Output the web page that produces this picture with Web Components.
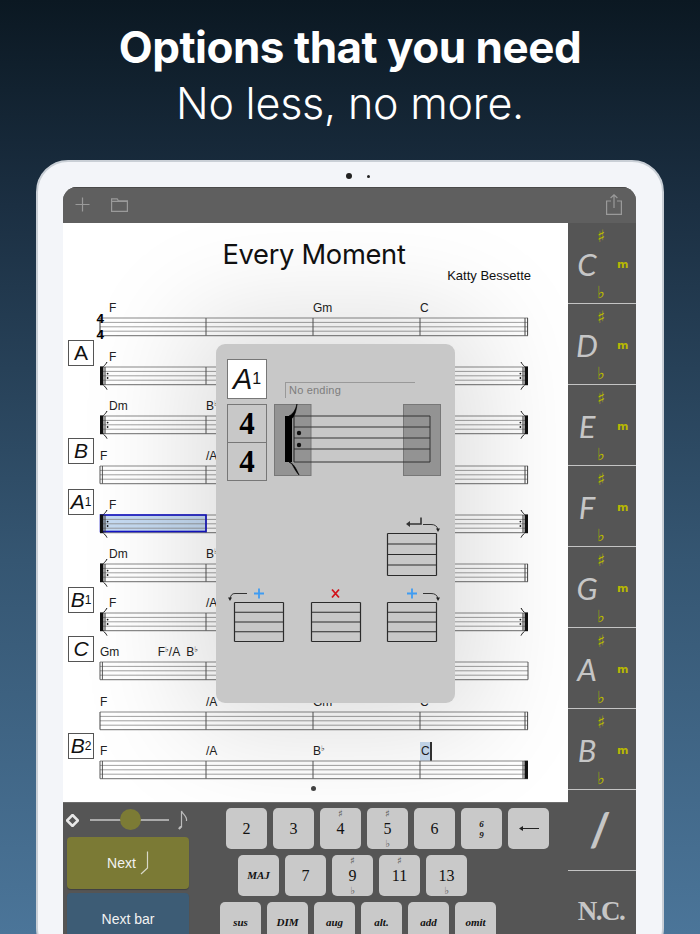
<!DOCTYPE html>
<html>
<head>
<meta charset="utf-8">
<style>
  html, body { margin: 0; height: 934px; overflow: hidden; }
  body {
    background: linear-gradient(180deg, #0b1822 0%, #1b2f42 22%, #355672 60%, #4b7599 100%);
    font-family: "Liberation Sans", sans-serif;
  }
</style>
</head>
<body>
<promo-page>
  <promo-title slot="title"></promo-title>
  <tablet-frame>
    <app-toolbar></app-toolbar>
    <div style="display:flex">
      <div style="width:505px;flex:none">
        <score-sheet>
          <staff-row start="time" end="double" chords="F||Gm|C"></staff-row>
          <staff-row mark="A" mark-top="1" start="repeat" end="repeat" chords="F"></staff-row>
          <staff-row start="repeat" end="repeat" chords="Dm|B♭"></staff-row>
          <staff-row mark="B" start="double" end="double" chords="F|/A"></staff-row>
          <staff-row mark="A" sup="1" mark-top="2" start="repeat" end="repeat" selected chords="F"></staff-row>
          <staff-row start="repeat" end="double" chords="Dm|B♭"></staff-row>
          <staff-row mark="B" sup="1" mark-top="2" start="repeat" end="repeat" chords="F|/A"></staff-row>
          <staff-row mark="C" mark-top="2" start="double" end="single" chords="Gm&#8195;&#8195;&#8195;&#8201;F♭/A&#8194;B♭"></staff-row>
          <staff-row start="single" end="double" chords="F|/A|Gm|C"></staff-row>
          <staff-row mark="B" sup="2" start="double" end="final" cursor chords="F|/A|B♭|C"></staff-row>
          <bar-options slot="overlay"></bar-options>
        </score-sheet>
        <entry-panel></entry-panel>
      </div>
      <chord-rail></chord-rail>
    </div>
  </tablet-frame>
</promo-page>

<script>
// chord names have small raised flats
function chordHtml(text) {
  return text.replace(/♭/g, '<sup>♭</sup>');
}

class PromoPage extends HTMLElement {
  constructor() {
    super();
    this.attachShadow({ mode: 'open' }).innerHTML = `
    <style>
      :host { display: block; width: 700px; height: 934px; overflow: hidden; }
    </style>
    <slot name="title"></slot>
    <slot></slot>`;
  }
}

class PromoTitle extends HTMLElement {
  constructor() {
    super();
    this.attachShadow({ mode: 'open' }).innerHTML = `
    <style>
      :host {
        display: block; height: 160px; box-sizing: border-box; padding-top: 19px;
        text-align: center; color: #fff; font-family: Inter, "Liberation Sans", sans-serif;
        font-size: 43px; line-height: 56px;
      }
      b { display: block; font-size: 44px; font-weight: 700; letter-spacing: -0.5px; }
      span { display: block; font-weight: 300; letter-spacing: -0.2px; }
    </style>
    <b>Options that you need</b>
    <span>No less, no more.</span>`;
  }
}

class TabletFrame extends HTMLElement {
  constructor() {
    super();
    this.attachShadow({ mode: 'open' }).innerHTML = `
    <style>
      :host {
        display: block; box-sizing: border-box; width: 628px; height: 800px; margin-left: 36px;
        background: #f3f5f9; border: 2px solid #c9cfd6; border-radius: 32px;
      }
      .camera { display: flex; justify-content: center; align-items: center; gap: 15px; height: 25px; padding: 3px 0 0 16px; box-sizing: border-box; }
      .camera i { display: block; width: 6px; height: 6px; border-radius: 50%; background: #222; }
      .camera i + i { width: 3px; height: 3px; }
      .screen {
        margin-left: 25px; width: 573px; border-radius: 14px 14px 0 0;
        overflow: hidden; background: #555;
      }
    </style>
    <div class="camera"><i></i><i></i></div>
    <div class="screen"><slot></slot></div>`;
  }
}

class AppToolbar extends HTMLElement {
  constructor() {
    super();
    this.attachShadow({ mode: 'open' }).innerHTML = `
    <style>
      :host {
        display: flex; align-items: center; height: 36px; padding: 0 14px 2px 12px;
        background: #5f5f5f; border-top: 1px solid #4a4a4a; box-sizing: border-box;
      }
      svg { display: block; fill: none; stroke: #9a9a9a; stroke-width: 1.2; }
      .grow { flex: 1; }
    </style>
    <svg width="15" height="15" viewBox="0 0 15 15"><path d="M7.5 .5v14M.5 7.5h14"/></svg>
    <svg style="margin-left:21px" width="17" height="14" viewBox="0 0 17 14"><path d="M.6 13.4V.8h5.6l1.2 2h9v10.6zM.6 3.4h16"/></svg>
    <div class="grow"></div>
    <svg width="16" height="21" viewBox="0 0 16 21"><path d="M5 7H.6v13.4h14.8V7H11M8 14V1M4.6 4 8 .8 11.4 4"/></svg>`;
  }
}

class ScoreSheet extends HTMLElement {
  constructor() {
    super();
    this.attachShadow({ mode: 'open' }).innerHTML = `
    <style>
      :host {
        display: block; position: relative; height: 579px; overflow: hidden;
        background: #fff; color: #111;
      }
      header { display: flex; flex-direction: column; height: 67px; box-sizing: border-box; padding-top: 16px; }
      h1 { margin: 0; padding-right: 3px; font: 400 27.3px/32px Inter, "Liberation Sans", sans-serif; text-align: center; letter-spacing: -0.3px; color: #111; }
      .author { align-self: flex-end; margin: -3px 37px 0 0; font: 13px/16px "Liberation Sans", sans-serif; }
      .dot { width: 5px; height: 5px; margin: 4px auto 0; border-radius: 50%; background: #444; transform: translateX(-2px); }
    </style>
    <header>
      <h1>Every Moment</h1>
      <div class="author">Katty Bessette</div>
    </header>
    <slot></slot>
    <div class="dot"></div>
    <slot name="overlay"></slot>`;
  }
}

class StaffRow extends HTMLElement {
  connectedCallback() {
    const start = this.getAttribute('start') || 'single';
    const end = this.getAttribute('end') || 'single';
    const mark = this.getAttribute('mark');
    const sup = this.getAttribute('sup');
    const top = this.getAttribute('mark-top') || 0;
    const chords = (this.getAttribute('chords') || '').split('|');
    const firstPad = (start === 'repeat' || start === 'time') ? 9 : 0;
    const cursor = this.hasAttribute('cursor');
    const selected = this.hasAttribute('selected');

    const bars = [0, 1, 2, 3].map(i => {
      let text = chords[i] ? chordHtml(chords[i]) : '';
      if (cursor && i === 3) text = `<span class="cur">${text}</span>`;
      return `<div class="bar" style="padding-left:${i === 0 ? firstPad : 0}px">${text}</div>`;
    }).join('');

    const lines = [0, 4.4, 8.8, 13.2, 17.6].map(y => `<path d="M0 ${y}H428" stroke="#8a8a8a" stroke-width="${y === 0 || y === 17.6 ? 1.1 : .8}"/>`).join('');
    const barlines = [106, 213, 320].map(x => `<path d="M${x} 0V17.6" stroke="#555" stroke-width="1"/>`).join('');

    this.attachShadow({ mode: 'open' }).innerHTML = `
    <style>
      :host {
        display: flex; gap: 6px; height: 49.2px; padding-left: 5px;
        font: 12px "Liberation Sans", sans-serif; color: #222;
      }
      .markcol { width: 26px; flex: none; }
      .mark {
        box-sizing: border-box; width: 26px; height: 26px; border: 1px solid #555; background: #fff;
        display: flex; align-items: center; justify-content: center;
        font: ${sup || mark === 'B' || mark === 'C' ? 'italic ' : ''}21px "Liberation Sans", sans-serif; color: #111;
      }
      .mark sup { font-size: 12px; font-style: normal; line-height: 0; vertical-align: 9px; }
      .chords { display: grid; grid-template-columns: 106px 107px 107px 108px; height: 28px; align-items: end; }
      .bar { padding-bottom: 3px; line-height: 13px; white-space: pre; }
      .bar sup { font: 8px/0 "DejaVu Sans", sans-serif; vertical-align: 4px; }
      .cur { display: inline-block; margin-bottom: -3px; padding: 3px 0 3px 1px; background: #c8dbf0; border-right: 2px solid #333; }
      svg { display: block; overflow: visible; }
    </style>
    <div class="markcol">${mark ? `<div class="mark" style="margin-top:${top}px">${mark}${sup ? `<sup>${sup}</sup>` : ''}</div>` : ''}</div>
    <div>
      <div class="chords">${bars}</div>
      <svg width="428" height="18" viewBox="0 0 428 18">
        ${selected ? '<rect x=".5" y="0" width="105.5" height="16.5" fill="#c5daf1"/>' : ''}
        ${lines}${barlines}
        ${selected ? '<rect x=".5" y="0" width="105.5" height="16.5" fill="none" stroke="#1414c8" stroke-width="1.6"/>' : ''}
        ${this.startBar(start)}${this.endBar(end)}
      </svg>
    </div>`;
  }

  startBar(kind) {
    if (kind === 'repeat') {
      return `<path d="M0-.5h3.4v18.6H0z" fill="#111"/><path d="M5 0v17.6" stroke="#333"/>
        <circle cx="7.6" cy="6.6" r=".9" fill="#111"/><circle cx="7.6" cy="11" r=".9" fill="#111"/>
        <path d="M3.4-.5C5-2 6-3 7-5M3.4 18.1C5 19.6 6 20.6 7 22.6" fill="none" stroke="#111" stroke-width="1"/>`;
    }
    if (kind === 'time') {
      return `<path d="M0 0v17.6" stroke="#333"/>
        <text x="-3.500" y="5" font-family="Liberation Sans" font-weight="700" font-size="13.5" fill="#000">4</text>
        <text x="-3.500" y="21" font-family="Liberation Sans" font-weight="700" font-size="13.5" fill="#000">4</text>`;
    }
    if (kind === 'double') return '<path d="M0 0v17.6M2.4 0v17.6" stroke="#444" stroke-width=".9"/>';
    return '<path d="M0 0v17.6" stroke="#444"/>';
  }

  endBar(kind) {
    if (kind === 'repeat') {
      return `<path d="M424.6-.5H428v18.6h-3.4z" fill="#111"/><path d="M423 0v17.6" stroke="#333"/>
        <circle cx="420.4" cy="6.6" r=".9" fill="#111"/><circle cx="420.4" cy="11" r=".9" fill="#111"/>
        <path d="M424.6-.5C423-2 422-3 421-5M424.6 18.1C423 19.6 422 20.6 421 22.6" fill="none" stroke="#111"/>`;
    }
    if (kind === 'double') return '<path d="M425 0v17.6M427.6 0v17.6" stroke="#444" stroke-width="1"/>';
    if (kind === 'final') return '<path d="M424.5-.2H428v18h-3.5z" fill="#111"/><path d="M423 0v17.6" stroke="#444"/>';
    return '<path d="M428 0v17.6" stroke="#555"/>';
  }
}

// the grey popup that edits one bar
class BarOptions extends HTMLElement {
  constructor() {
    super();
    this.attachShadow({ mode: 'open' }).innerHTML = `
    <style>
      :host {
        position: absolute; left: 153px; top: 121px; width: 239px; height: 359px;
        box-sizing: border-box; padding: 15px 11px 0 11px;
        background: #c8c8c8; border-radius: 9px;
        box-shadow: 0 0 110px 30px rgba(0,0,0,.13);
      }
      .top { display: grid; grid-template-columns: 40px 167px; column-gap: 7px; row-gap: 5px; }
      .cell { box-sizing: border-box; border: 1px solid #777; display: flex; align-items: center; justify-content: center; }
      .rehearsal { height: 40px; background: #fff; font: italic 29px "Liberation Sans", sans-serif; color: #111; }
      .rehearsal sup { font: 16px "Liberation Sans", sans-serif; line-height: 0; vertical-align: 11px; }
      .ending {
        align-self: end; width: 130px; height: 16px; margin: 0 0 1px 11px; box-sizing: border-box;
        border-top: 1px solid #999; border-left: 1px solid #999; padding-left: 3px;
        font: 11px/15px "Liberation Sans", sans-serif; color: #7d7d7d; letter-spacing: .2px;
      }
      .time { display: flex; flex-direction: column; height: 77px; }
      .time .cell { height: 39px; font: 700 31px/1 "Liberation Serif", serif; color: #000; }
      .time .cell + .cell { margin-top: -1px; }
      .editor { display: block; }
      .moves { display: grid; grid-template-columns: repeat(3, 50px); column-gap: 26.5px; row-gap: 8px; margin: 34px 0 0 7px; }
    </style>
    <div class="top">
      <div class="cell rehearsal">A<sup>1</sup></div>
      <div class="ending">No ending</div>
      <div class="time"><div class="cell">4</div><div class="cell">4</div></div>
      <svg class="editor" width="167" height="72" viewBox="0 0 167 72">
        <rect x=".5" y=".5" width="36.5" height="71" fill="#939393" stroke="#777"/>
        <rect x="129.500" y=".5" width="37" height="71" fill="#939393" stroke="#777"/>
        <path d="M20 12H156M20 23H156M20 34H156M20 45H156M20 58H156M156 12V58" stroke="#333" stroke-width="1" fill="none"/>
        <path d="M11 12h7v46h-7z" fill="#000"/><path d="M20 12v46" stroke="#222"/>
        <path d="M15 12C19 10 21.500 6 23 0 22.500 6 21 11 18.500 14zM15 58c4 1 7 6 10 13-3.500-4-6-9-7-11z" fill="#000" stroke="#000" stroke-width=".6"/>
        <circle cx="25" cy="29" r="2.2" fill="#111"/><circle cx="25" cy="41" r="2.2" fill="#111"/>
      </svg>
    </div>
    <div class="moves">
      <mini-staff kind="newline" style="grid-column:3"></mini-staff>
      <mini-staff kind="before"></mini-staff>
      <mini-staff kind="remove"></mini-staff>
      <mini-staff kind="after"></mini-staff>
    </div>`;
  }
}

class MiniStaff extends HTMLElement {
  connectedCallback() {
    const kind = this.getAttribute('kind');
    const h = kind === 'newline' ? 43 : 40;
    const rows = [0, 1, 2, 3, 4].map(i => 18.5 + (h - 1) * i / 4);
    const arrowRight = '<path d="M36 9.5h8c4 0 6 1.5 7 5" fill="none" stroke="#333"/><path d="M49 13.5h4l-2 3.500z" fill="#222"/>';
    const arrowLeft = '<path d="M13 9.5H1c-3 0-4 1.5-5 5" fill="none" stroke="#333"/><path d="M-6 13.5h4l-2 3.500z" fill="#222"/>';
    const plus = x => `<path d="M${x - 5} 9.5h10M${x} 4.500v10" stroke="#3f9cf2" stroke-width="1.8"/>`;
    const icon = {
      newline: `<path d="M34 2.5v6.5H21" fill="none" stroke="#333" stroke-width="1.6"/><path d="M23 6v6l-4-3z" fill="#333"/>${arrowRight}`,
      before: arrowLeft + plus(25),
      remove: '<path d="M21 5.5l7 8M28 5.5l-7 8" stroke="#d2141c" stroke-width="1.8"/>',
      after: arrowRight + plus(25),
    }[kind];

    this.attachShadow({ mode: 'open' }).innerHTML = `
    <style>
      :host { display: block; width: 50px; height: ${18 + h}px; }
      svg { display: block; overflow: visible; }
    </style>
    <svg width="50" height="${18 + h}" viewBox="0 0 50 ${18 + h}">
      ${icon}
      <path d="${rows.map(y => `M.5 ${y}H49.5`).join('')}M.5 18.5V${rows[4]}M49.5 18.5V${rows[4]}" stroke="#2b2b2b" stroke-width="1.2" fill="none"/>
    </svg>`;
  }
}

class ChordKey extends HTMLElement {
  connectedCallback() {
    const sharp = this.hasAttribute('sharp') ? '♯' : '';
    const flat = this.hasAttribute('flat') ? '♭' : '';
    const small = this.hasAttribute('small');
    this.attachShadow({ mode: 'open' }).innerHTML = `
    <style>
      :host {
        display: grid; grid-template-rows: 11px 1fr 11px; justify-items: center; align-items: center;
        box-sizing: border-box; width: 41px; height: 41px; border-radius: 5px; background: #c9c9c9; color: #111;
        font: ${small ? 'italic 700 11px' : '16px'} "Liberation Serif", serif;
      }
      span { font: 10px/11px "DejaVu Sans", sans-serif; color: #555; }
      div { line-height: 1; }
    </style>
    <span>${sharp}</span><div><slot></slot></div><span>${flat}</span>`;
  }
}

class EntryPanel extends HTMLElement {
  constructor() {
    super();
    this.attachShadow({ mode: 'open' }).innerHTML = `
    <style>
      :host {
        display: flex; height: 132px; overflow: hidden; background: #555; border-top: 1.5px solid #6d6d6d; box-sizing: border-box;
        font-family: "Liberation Sans", sans-serif;
      }
      .left { width: 122px; margin-left: 4px; flex: none; }
      .speed { display: flex; align-items: center; height: 34px; margin-left: -1px; }
      .track { position: relative; width: 82px; height: 2px; margin: 0 9px 0 11px; background: #aaa; }
      .track i { position: absolute; left: 30px; top: -10px; width: 21px; height: 21px; border-radius: 50%; background: #7c7b35; }
      .btn {
        height: 52px; border-radius: 4px; display: flex; align-items: center; justify-content: center; gap: 4px;
        color: #f2f2f2; font-size: 14px; box-shadow: 0 1px 1px rgba(0,0,0,.25);
      }
      .next { background: #7b7a35; }
      .bar { background: #3d5c75; margin-top: 4px; }
      .keys { display: flex; flex-direction: column; gap: 6px; margin: 5px 0 0 31px; }
      .row { display: flex; gap: 6px; }
      svg { display: block; flex: none; }
      .stack { display: block; font-size: 9px; line-height: 10.5px; text-align: center; }
    </style>
    <div class="left">
      <div class="speed">
        <svg width="13" height="13" viewBox="0 0 13 13"><path d="M6.5 1 12 6.5 6.5 12 1 6.5z" fill="none" stroke="#e8e8e8" stroke-width="2.6"/></svg>
        <div class="track"><i></i></div>
        <svg width="11" height="20" viewBox="0 0 11 20" fill="none" stroke="#bbb"><path d="M1 19 3.5 17V1c1 3 6 5 5 10" stroke-width="1.2"/><path d="M1 19c1-2 2-2.500 2.500-2" stroke-width="2"/></svg>
      </div>
      <div class="btn next">Next
        <svg width="9" height="24" viewBox="0 0 9 24" fill="none" stroke="#d8d8c8" stroke-width="1.2"><path d="M7.500 .5V17L1 23"/></svg>
      </div>
      <div class="btn bar">Next bar</div>
    </div>
    <div class="keys">
      <div class="row" style="margin-left:6px">
        <chord-key>2</chord-key><chord-key>3</chord-key><chord-key sharp>4</chord-key><chord-key sharp flat>5</chord-key>
        <chord-key>6</chord-key><chord-key small><span class="stack">6<br>9</span></chord-key>
        <chord-key><svg width="20" height="7" viewBox="0 0 20 7"><path d="M2 3.500H20" stroke="#222"/><path d="M0 3.500 4 1v5z" fill="#222"/></svg></chord-key>
      </div>
      <div class="row" style="margin-left:18px">
        <chord-key small>MAJ</chord-key><chord-key>7</chord-key><chord-key sharp flat>9</chord-key><chord-key sharp>11</chord-key><chord-key flat>13</chord-key>
      </div>
      <div class="row">
        <chord-key small>sus</chord-key><chord-key small>DIM</chord-key><chord-key small>aug</chord-key>
        <chord-key small>alt.</chord-key><chord-key small>add</chord-key><chord-key small>omit</chord-key>
      </div>
    </div>`;
  }
}

class ChordRail extends HTMLElement {
  constructor() {
    super();
    const notes = ['C', 'D', 'E', 'F', 'G', 'A', 'B'].map(n => `
      <div class="note">
        <span class="acc" style="grid-row:1">♯</span>
        <span class="name">${n}</span>
        <span class="m">m</span>
        <span class="acc" style="grid-row:3">♭</span>
      </div>`).join('');
    this.attachShadow({ mode: 'open' }).innerHTML = `
    <style>
      :host { display: block; width: 68px; flex: none; background: #555; color: #c6c6c6; font-family: Lato, "Liberation Sans", sans-serif; }
      .note {
        display: grid; grid-template-columns: 38px 30px; grid-template-rows: 22px 1fr 22px;
        box-sizing: border-box; height: 81px; border-bottom: 1.5px solid #c4c4c4; padding-top: 2px;
      }
      .acc { grid-column: 1; justify-self: end; width: 10px; text-align: center; font: 700 17px/22px "DejaVu Sans", sans-serif; color: #b8b800; }
      .name { grid-column: 1; grid-row: 1 / 4; align-self: center; justify-self: center; font-size: 31px; font-weight: 400; font-style: italic; line-height: 1; }
      .m { grid-column: 2; grid-row: 2; align-self: center; padding-left: 11px; font: 700 11px "DejaVu Sans", sans-serif; color: #b8b800; }
      .cell { display: flex; align-items: center; justify-content: center; height: 81px; box-sizing: border-box; }
      .slash { font-size: 46px; font-weight: 700; height: 81px; border-bottom: 1.5px solid #c4c4c4; padding: 0 4px 3px 0; }
      .nc { font: 700 27px "Liberation Serif", serif; letter-spacing: -1.5px; padding-right: 2px; }
    </style>
    ${notes}
    <div class="cell slash">/</div>
    <div class="cell nc">N.C.</div>`;
  }
}

customElements.define('promo-page', PromoPage);
customElements.define('promo-title', PromoTitle);
customElements.define('tablet-frame', TabletFrame);
customElements.define('app-toolbar', AppToolbar);
customElements.define('score-sheet', ScoreSheet);
customElements.define('staff-row', StaffRow);
customElements.define('bar-options', BarOptions);
customElements.define('mini-staff', MiniStaff);
customElements.define('chord-key', ChordKey);
customElements.define('entry-panel', EntryPanel);
customElements.define('chord-rail', ChordRail);
</script>
</body>
</html>
